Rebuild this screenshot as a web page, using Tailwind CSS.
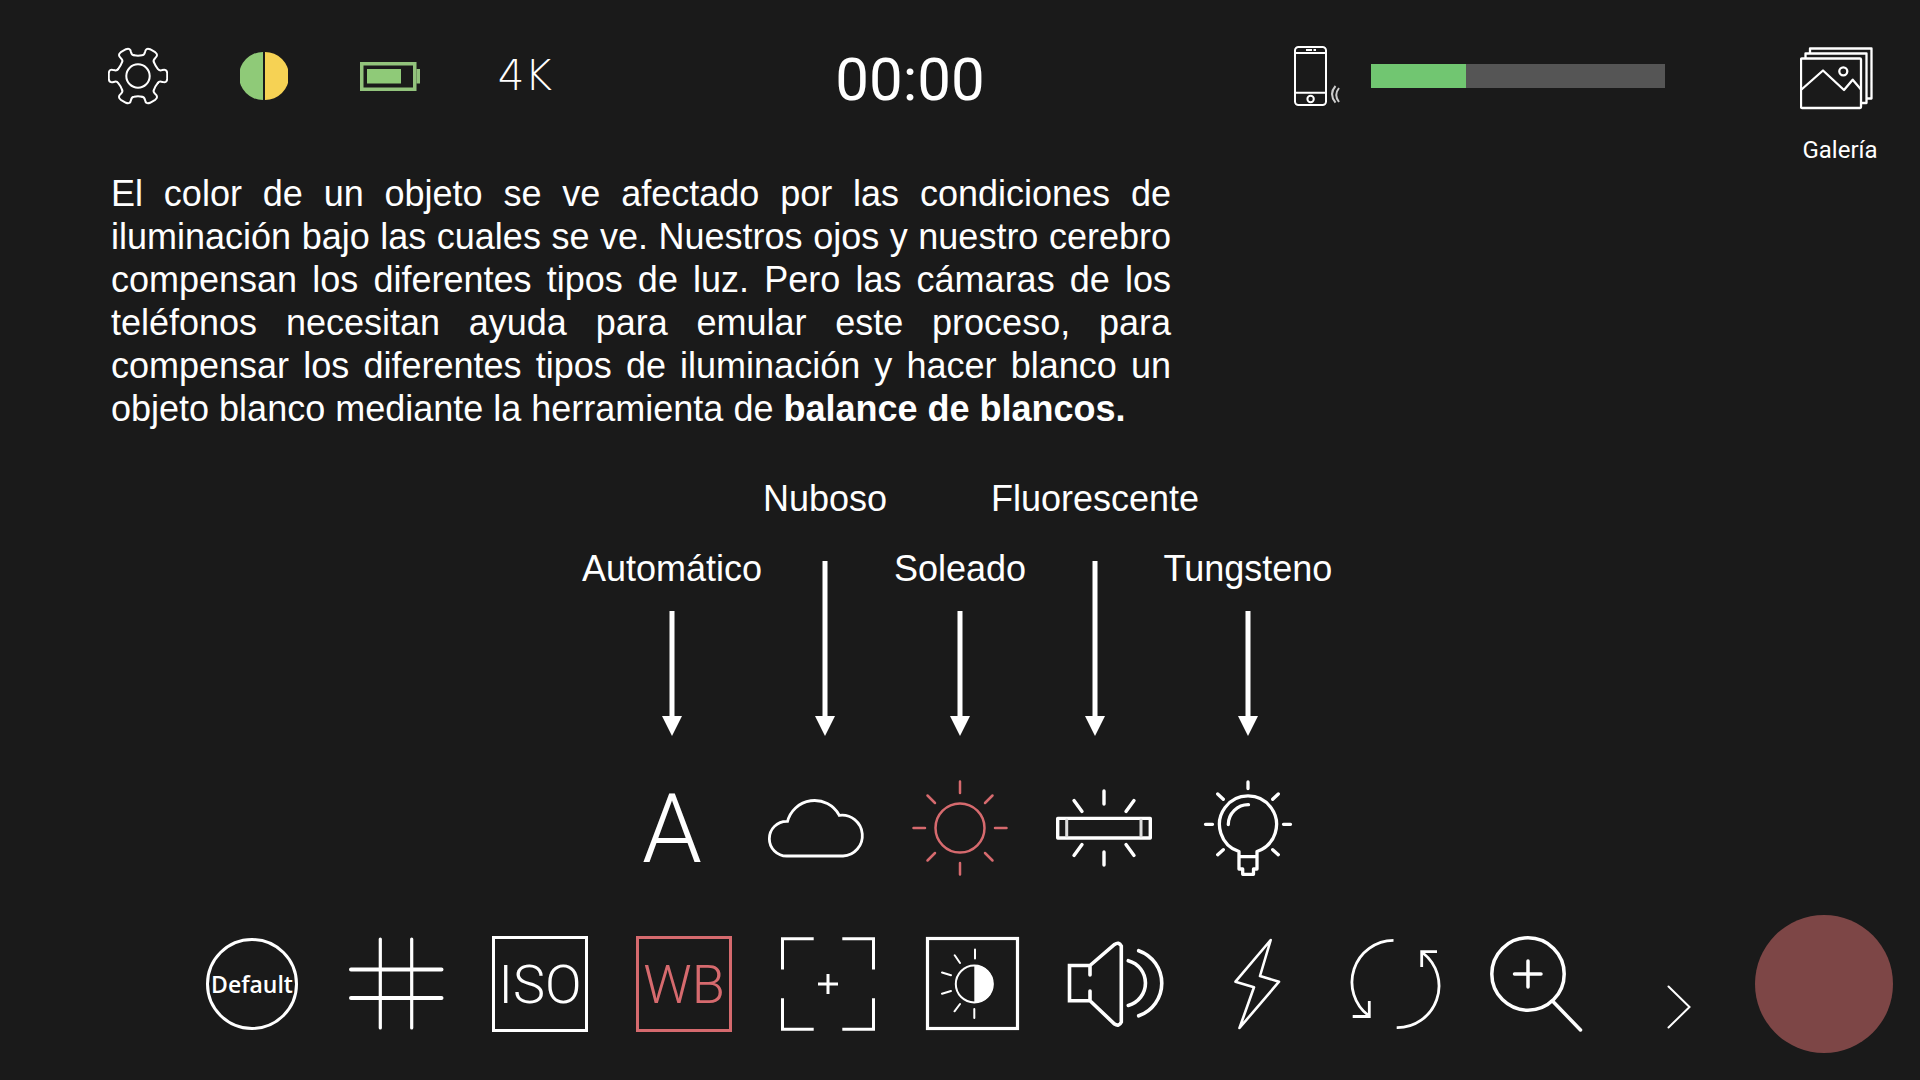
<!DOCTYPE html>
<html lang="es">
<head>
<meta charset="utf-8">
<meta name="viewport" content="width=device-width, initial-scale=1">
<title>Cámara: balance de blancos</title>
<script src="https://cdn.jsdelivr.net/npm/@tailwindcss/browser@4"></script>
</head>
<body class="flex min-h-screen flex-col bg-[#1a1a1a] font-['Liberation_Sans',Arial,sans-serif] text-white">

<!-- Status bar -->
<header class="flex items-start pt-[46px] pr-10 pl-[108px]">
  <div class="flex h-[60px] items-center gap-[72px]">
    <button type="button" aria-label="Ajustes">
      <svg class="block size-[60px]" viewBox="-30 -30 60 60" fill="none" stroke="currentColor" stroke-width="2" stroke-linecap="round" stroke-linejoin="round">
        <defs><path id="tooth" d="M-4,-20.7Q0,-20 4,-20.7Q6.3,-20.7 7,-24Q7.8,-28.5 12,-26.8L17.2,-23.8Q20.8,-21 17.3,-18.1Q14.8,-15.8 15.9,-13.8"/></defs>
        <use href="#tooth"/><use href="#tooth" transform="rotate(60)"/><use href="#tooth" transform="rotate(120)"/>
        <use href="#tooth" transform="rotate(180)"/><use href="#tooth" transform="rotate(240)"/><use href="#tooth" transform="rotate(300)"/>
        <circle r="11.7"/>
      </svg>
    </button>
    <svg class="block size-12" viewBox="0 0 48 48" role="img" aria-label="Color">
      <path d="M23 0A24 24 0 0 0 23 48Z" fill="#8fca78"/><path d="M25 0A24 24 0 0 1 25 48Z" fill="#f6d254"/>
    </svg>
    <svg class="block h-[29px] w-[60px]" viewBox="0 0 60 29" role="img" aria-label="Batería">
      <rect x="1.75" y="1.75" width="53" height="25.5" fill="none" stroke="#92c37c" stroke-width="3.5"/>
      <path d="M56.5 7H60V21.500H56.500Z" fill="#92c37c"/><path d="M7 7H41V21.500H7Z" fill="#8fca78"/>
    </svg>
    <button type="button" class="w-[66px] font-['DejaVu_Sans'] text-[42px] leading-[60px] font-extralight">4K</button>
  </div>
  <div class="flex-1 pr-8 text-center font-[Roboto,sans-serif] text-[60px] leading-[68px]"><time>00:00</time></div>
  <div class="flex h-[60px] items-center">
    <svg class="block h-[60px] w-12" viewBox="0 0 48 60" fill="none" stroke="currentColor" stroke-width="2" role="img" aria-label="Micrófono del teléfono">
      <rect x="1" y="1" width="31" height="58" rx="3.500"/><path d="M1 7H32M1 46.700H32M12 4H18M19.500 4H22"/><circle cx="16.600" cy="53" r="3.200"/>
      <path stroke="#ccc" stroke-width="2" d="M41.500 40Q34.500 48 41.500 56.700M45 42Q39.500 49 45 56"/>
    </svg>
    <div role="meter" aria-label="Nivel de audio" aria-valuemin="0" aria-valuemax="100" aria-valuenow="32" class="ml-[29px] h-6 w-[294px] bg-[#555]">
      <div class="h-full bg-[#71c671]" style="width:32.3%"></div>
    </div>
  </div>
  <button type="button" class="ml-[135px] flex w-20 flex-col gap-6">
    <svg class="block h-16 w-[74px]" viewBox="0 0 74 64" fill="none" stroke="currentColor" stroke-width="2.300" stroke-linejoin="round">
      <rect x="1" y="12.500" width="60" height="49.500" rx="1"/>
      <path d="M5.500 12V7.500H66.500V57H62M10 7V2.500H71.500V52.500H67M1.500 43.500L23 24.500L44 44L52.700 33.700L61 43.500"/><circle cx="43.300" cy="25.300" r="4"/>
    </svg>
    <span class="w-full text-center font-[Roboto,sans-serif] text-2xl leading-8">Galería</span>
  </button>
</header>

<main>
  <p class="mt-[6px] ml-[111px] max-w-[1060px] text-justify text-[36px] leading-[43px]">El color de un objeto se ve afectado por las condiciones de iluminación bajo las cuales se ve. Nuestros ojos y nuestro cerebro compensan los diferentes tipos de luz. Pero las cámaras de los teléfonos necesitan ayuda para emular este proceso, para compensar los diferentes tipos de iluminación y hacer blanco un objeto blanco mediante la herramienta de <strong>balance de blancos.</strong></p>

  <!-- White balance presets, each named by an arrow -->
  <div class="mx-auto mt-[47px] grid w-[720px] max-w-full grid-cols-5 items-end text-[36px] leading-[43px] whitespace-nowrap">
    <div class="flex flex-col items-center gap-[21px]">
      <span id="m-auto">Automático</span>
      <svg class="block h-[125px] w-5" viewBox="0 0 20 125" fill="currentColor"><path d="M7.500 0H12.500V105H20L10 125L0 105H7.500Z"/></svg>
    </div>
    <div class="flex flex-col items-center gap-[41px] pl-[18px]">
      <span id="m-nube">Nuboso</span>
      <svg class="block h-[175px] w-5" viewBox="0 0 20 175" fill="currentColor"><path d="M7.500 0H12.500V155H20L10 175L0 155H7.500Z"/></svg>
    </div>
    <div class="flex flex-col items-center gap-[21px]">
      <span id="m-sol">Soleado</span>
      <svg class="block h-[125px] w-5" viewBox="0 0 20 125" fill="currentColor"><path d="M7.500 0H12.500V105H20L10 125L0 105H7.500Z"/></svg>
    </div>
    <div class="flex flex-col items-center gap-[41px] pr-[18px]">
      <span id="m-fluor">Fluorescente</span>
      <svg class="block h-[175px] w-5" viewBox="0 0 20 175" fill="currentColor"><path d="M7.500 0H12.500V155H20L10 175L0 155H7.500Z"/></svg>
    </div>
    <div class="flex flex-col items-center gap-[21px]">
      <span id="m-tung">Tungsteno</span>
      <svg class="block h-[125px] w-5" viewBox="0 0 20 125" fill="currentColor"><path d="M7.500 0H12.500V105H20L10 125L0 105H7.500Z"/></svg>
    </div>
  </div>

  <div class="mx-auto mt-11 grid w-[720px] max-w-full grid-cols-5">
    <button type="button" aria-labelledby="m-auto" class="flex h-24 justify-center font-[Roboto,sans-serif] text-[96px] leading-[98px] font-light">A</button>
    <button type="button" aria-labelledby="m-nube" class="h-24">
      <svg class="block h-24 w-36" viewBox="0 0 144 96" fill="none" stroke="currentColor" stroke-width="2.800"><path d="M43.200 41.300H42.700A17.350 17.350 0 0 0 42.700 76H99A20.400 20.400 0 1 0 95.300 35.400A28 28 0 0 0 43.200 42.500"/></svg>
    </button>
    <button type="button" aria-labelledby="m-sol" aria-pressed="true" class="h-24 text-[#d66a6e]">
      <svg class="block h-24 w-36" viewBox="0 0 144 96" fill="none" stroke="currentColor" stroke-width="2.500" stroke-linecap="round"><circle cx="72" cy="48" r="24.500"/><path d="M72 1.500V13M72 83V94.500M25.500 48H37M107 48H118.500M39.500 15.500L47 23M104.500 15.500L97 23M39.500 80.500L47 73M104.500 80.500L97 73"/></svg>
    </button>
    <button type="button" aria-labelledby="m-fluor" class="h-24">
      <svg class="block h-24 w-36" viewBox="0 0 144 96" fill="none" stroke="currentColor" stroke-width="3.400" stroke-linecap="round" stroke-linejoin="round"><path d="M25.700 38.400H118.300V58H25.700ZM72 11V24M72 72V85M42 20.500L50 31.500M102 20.500L94 31.500M42 75.500L50 64.500M102 75.500L94 64.500"/><path stroke-width="3" stroke="#ddd" d="M34.700 40V56M109 40V56"/></svg>
    </button>
    <button type="button" aria-labelledby="m-tung" class="h-24">
      <svg class="block h-24 w-36" viewBox="0 0 144 96" fill="none" stroke="currentColor" stroke-width="3.300" stroke-linecap="round" stroke-linejoin="round"><path d="M63 71.500A28.500 28.500 0 1 1 81 71.500V89H77.500V94.300H66.700V89H63ZM63 76.700H81M52.300 44.500A20 20 0 0 1 72.500 24.700M72 2V8.500M29.500 44.300H36.500M107.500 44.300H114.500M41.700 14L47.300 19.300M102.300 14L96.700 19.300M41.700 74.700L47.300 69.700M102.300 74.700L96.700 69.700"/></svg>
    </button>
  </div>
</main>

<!-- Camera tools and record button -->
<footer class="mt-auto flex items-center pr-[27px] pb-[27px] pl-[180px]">
  <nav class="grid flex-1 grid-cols-10 justify-items-center" aria-label="Herramientas">
    <button type="button" class="my-[2px] size-[92px] rounded-full border-[3px] border-white text-center font-['Open_Sans'] text-[23px] font-semibold"><span class="flex justify-center">Default</span></button>
    <button type="button" aria-label="Cuadrícula">
      <svg class="block h-24 w-36" viewBox="0 0 144 96" fill="none" stroke="currentColor" stroke-linecap="round"><path stroke-width="3.200" d="M56.300 3V92M87.700 3V92"/><path stroke-width="4" d="M27 33.400H117.500M27 62H117.500"/></svg>
    </button>
    <button type="button" class="flex size-24 items-center justify-center border-[3px] border-white font-[Roboto,sans-serif] text-[54px] font-light">ISO</button>
    <button type="button" aria-pressed="true" class="flex size-24 items-center justify-center border-[3px] border-[#d66a6e] font-[Roboto,sans-serif] text-[54px] font-light text-[#d66a6e]">WB</button>
    <button type="button" aria-label="Enfoque">
      <svg class="block h-24 w-36" viewBox="0 0 144 96" fill="none" stroke="currentColor" stroke-width="3"><path d="M57.700 2.700H26.500V33.500M86.300 2.700H117.500V33.500M57.700 93.300H26.500V62.300M86.300 93.300H117.500V62.300M72 38V58M62 48H82"/></svg>
    </button>
    <button type="button" aria-label="Exposición">
      <svg class="block h-24 w-36" viewBox="0 0 144 96" fill="none" stroke="currentColor" stroke-width="2"><rect x="27.500" y="2.500" width="90" height="90" stroke-width="3.200"/><circle cx="74.300" cy="48" r="18.500"/><path fill="currentColor" stroke="none" d="M74.300 29A19 19 0 0 1 74.300 67Z"/><path stroke-linecap="round" d="M75 13.500V22.500M54.700 19.300L60 27M42 36.500L51 39.300M42 57.800L51 55M54.500 75.300L60 68M74.300 73V82"/></svg>
    </button>
    <button type="button" aria-label="Sonido">
      <svg class="block h-24 w-36" viewBox="0 0 144 96" fill="none" stroke="currentColor" stroke-width="3.600" stroke-linecap="round" stroke-linejoin="miter"><path d="M46 39V29.500H25.500V64.700H46V55M46 29.500L70.500 8.500Q75 5.500 77.300 10V86Q75 91 70.500 88L46 64.700M84.300 24.700A23.200 23.200 0 0 1 84.300 69.500M94.700 14.700A34.500 34.500 0 0 1 94.700 79.800"/></svg>
    </button>
    <button type="button" aria-label="Flash">
      <svg class="block h-24 w-36" viewBox="0 0 144 96" fill="none" stroke="currentColor" stroke-width="2.600" stroke-linejoin="round"><path d="M82.700 4L47.500 45.700L66 51.300L51.500 92L91 45.700L72 40Z"/></svg>
    </button>
    <button type="button" aria-label="Cambiar cámara">
      <svg class="block h-24 w-36" viewBox="0 0 144 96" fill="none" stroke="currentColor" stroke-width="2.800"><path d="M61.500 4.400A41.800 41.800 0 0 0 36.500 79.500M64.700 91.700A41.800 41.800 0 0 0 91 17M37.300 65V80.500H20.700M89.700 31V15.700H105"/></svg>
    </button>
    <button type="button" aria-label="Acercar">
      <svg class="block h-24 w-36" viewBox="0 0 144 96" fill="none" stroke="currentColor" stroke-width="3.500" stroke-linecap="round"><circle cx="52" cy="38" r="36.200"/><path d="M38.500 38H65M52 25V51M77 65.500L104.500 94"/></svg>
    </button>
  </nav>
  <button type="button" aria-label="Más">
    <svg class="block h-24 w-[135px]" viewBox="0 0 135 96" fill="none" stroke="currentColor" stroke-width="2" stroke-linecap="round"><path d="M48.500 50.500L69.500 71L48.500 91.500"/></svg>
  </button>
  <button type="button" aria-label="Grabar" class="size-[138px] rounded-full bg-[#7d4646]"></button>
</footer>
</body>
</html>
